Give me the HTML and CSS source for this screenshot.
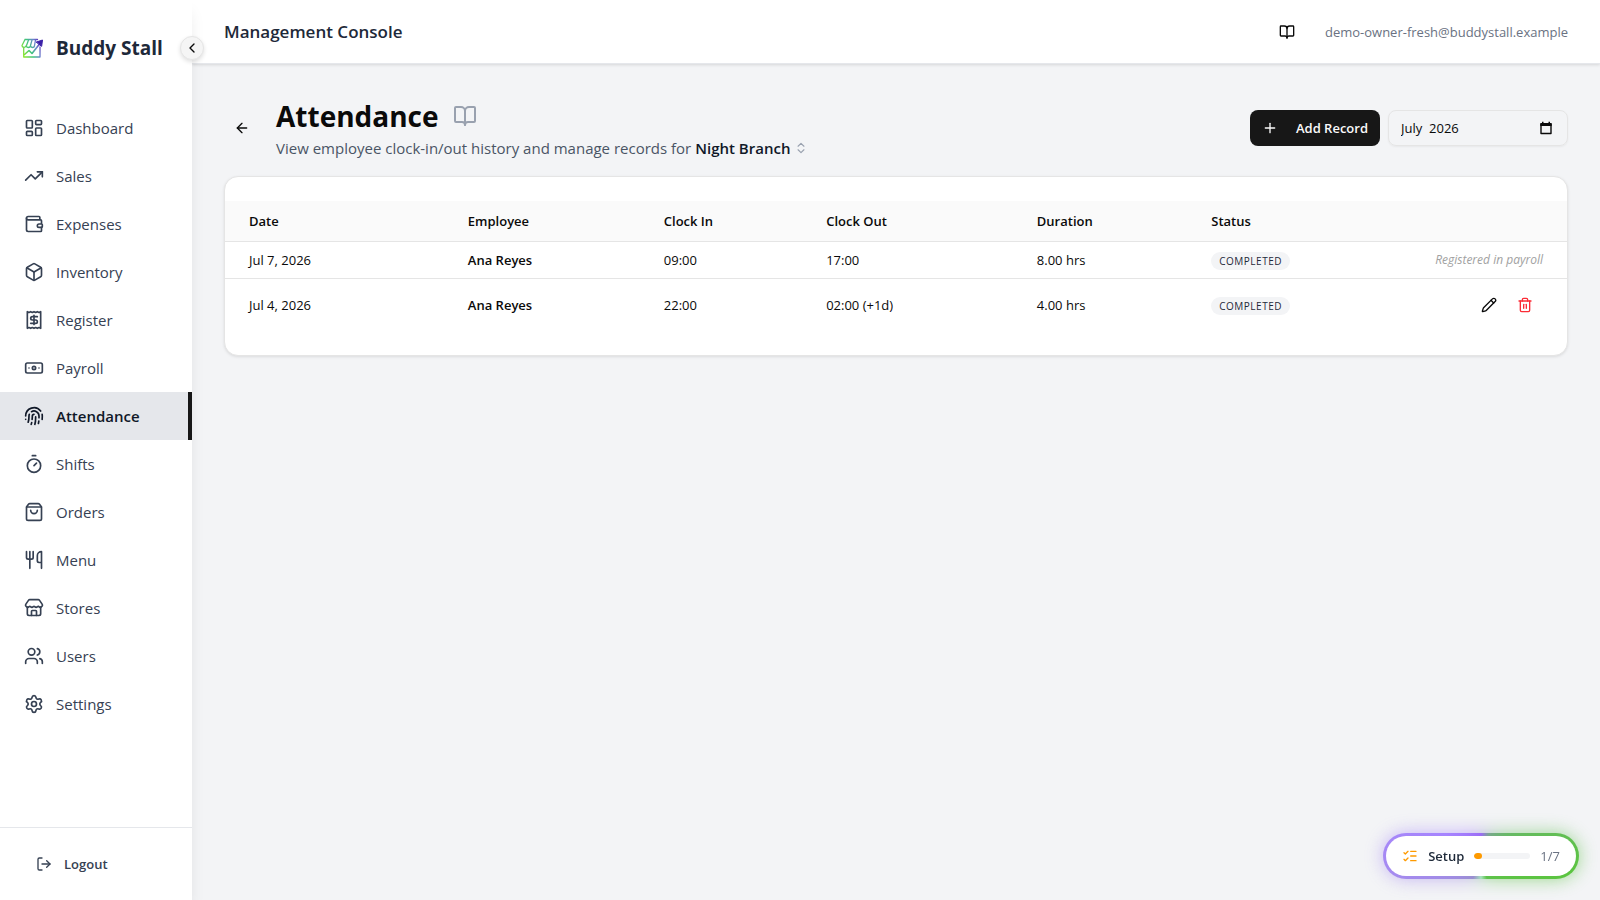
FILE: index.html
```html
<!DOCTYPE html>
<html lang="en">
<head>
    <meta charset="UTF-8">
    <meta name="viewport" content="width=device-width, initial-scale=1.0">
    <title>Attendance - Buddy Stall</title>
    <link rel="stylesheet" href="styles.css">
</head>
<body>
    <div class="app">
        <aside class="sidebar">
            <div class="brand">
                <svg class="brand-logo" viewBox="0 0 24 24" fill="none" stroke="url(#brandGradient)" stroke-width="1.3" stroke-linejoin="round" stroke-linecap="round">
                    <defs>
                        <linearGradient id="brandGradient" gradientUnits="userSpaceOnUse" x1="2" y1="16" x2="22" y2="8">
                            <stop offset="0" stop-color="#8be62c"/>
                            <stop offset="0.4" stop-color="#3fc47e"/>
                            <stop offset="0.7" stop-color="#6b84cc"/>
                            <stop offset="1" stop-color="#5b21b6"/>
                        </linearGradient>
                    </defs>
                    <path d="M5 3.500h12.500M5 3.500L2 9.500c0 2 3 2.500 4 .5 1 2 4 2 4.500 0 1 2 3.500 2 4 0"/>
                    <path d="M8.500 4L6.500 9.500M12 4L10.500 9.500M15.500 4L14.500 9.500"/>
                    <path d="M3.700 12v9h16.300V11"/>
                    <path d="M4.500 18.500l4.500-4 3 3L19.500 8" stroke-width="1.600"/>
                    <path d="M16.500 6L22.500 4l-.8 6z" fill="#3b1fa8" stroke="#3b1fa8" stroke-width="1"/>
                </svg>
                <span class="brand-name">Buddy Stall</span>
            </div>
            <button class="collapse-btn" type="button" aria-label="Collapse sidebar">
                <svg class="icon icon-sm" viewBox="0 0 24 24"><path d="m15 18-6-6 6-6"/></svg>
            </button>

            <nav class="nav">
                <a href="#" class="nav-link">
                    <svg class="icon" viewBox="0 0 24 24"><rect width="7" height="9" x="3" y="3" rx="1"/><rect width="7" height="5" x="14" y="3" rx="1"/><rect width="7" height="9" x="14" y="12" rx="1"/><rect width="7" height="5" x="3" y="16" rx="1"/></svg>
                    <span>Dashboard</span>
                </a>
                <a href="#" class="nav-link">
                    <svg class="icon" viewBox="0 0 24 24"><path d="M16 7h6v6"/><path d="m22 7-8.5 8.5-5-5L2 17"/></svg>
                    <span>Sales</span>
                </a>
                <a href="#" class="nav-link">
                    <svg class="icon" viewBox="0 0 24 24"><path d="M19 7V4a1 1 0 0 0-1-1H5a2 2 0 0 0 0 4h15a1 1 0 0 1 1 1v4h-3a2 2 0 0 0 0 4h3a1 1 0 0 0 1-1v-2a1 1 0 0 0-1-1"/><path d="M3 5v14a2 2 0 0 0 2 2h15a1 1 0 0 0 1-1v-4"/></svg>
                    <span>Expenses</span>
                </a>
                <a href="#" class="nav-link">
                    <svg class="icon" viewBox="0 0 24 24"><path d="M21 8a2 2 0 0 0-1-1.730l-7-4a2 2 0 0 0-2 0l-7 4A2 2 0 0 0 3 8v8a2 2 0 0 0 1 1.730l7 4a2 2 0 0 0 2 0l7-4A2 2 0 0 0 21 16Z"/><path d="m3.300 7 8.700 5 8.700-5"/><path d="M12 22V12"/></svg>
                    <span>Inventory</span>
                </a>
                <a href="#" class="nav-link">
                    <svg class="icon" viewBox="0 0 24 24"><path d="M4 2v20l2-1 2 1 2-1 2 1 2-1 2 1 2-1 2 1V2l-2 1-2-1-2 1-2-1-2 1-2-1-2 1Z"/><path d="M16 8h-6a2 2 0 1 0 0 4h4a2 2 0 1 1 0 4H8"/><path d="M12 17.500v-11"/></svg>
                    <span>Register</span>
                </a>
                <a href="#" class="nav-link">
                    <svg class="icon" viewBox="0 0 24 24"><rect width="20" height="12" x="2" y="6" rx="2"/><circle cx="12" cy="12" r="2"/><path d="M6 12h.01M18 12h.01"/></svg>
                    <span>Payroll</span>
                </a>
                <a href="#" class="nav-link active">
                    <svg class="icon" viewBox="0 0 24 24"><path d="M12 10a2 2 0 0 0-2 2c0 1.020-.1 2.510-.26 4"/><path d="M14 13.120c0 2.380 0 6.380-1 8.880"/><path d="M17.290 21.020c.12-.6.430-2.300.5-3.020"/><path d="M2 12a10 10 0 0 1 18-6"/><path d="M2 16h.01"/><path d="M21.800 16c.2-2 .131-5.354 0-6"/><path d="M5 19.500C5.500 18 6 15 6 12a6 6 0 0 1 .34-2"/><path d="M8.650 22c.21-.66.450-1.320.570-2"/><path d="M9 6.800a6 6 0 0 1 9 5.200v2"/></svg>
                    <span>Attendance</span>
                </a>
                <a href="#" class="nav-link">
                    <svg class="icon" viewBox="0 0 24 24"><path d="M10 2h4"/><path d="m12 14 3-3"/><circle cx="12" cy="14" r="8"/></svg>
                    <span>Shifts</span>
                </a>
                <a href="#" class="nav-link">
                    <svg class="icon" viewBox="0 0 24 24"><path d="M16 10a4 4 0 0 1-8 0"/><path d="M3.103 6.034h17.794"/><path d="M3.400 5.467a2 2 0 0 0-.4 1.200V20a2 2 0 0 0 2 2h14a2 2 0 0 0 2-2V6.667a2 2 0 0 0-.4-1.200l-2-2.667A2 2 0 0 0 17 2H7a2 2 0 0 0-1.600.8z"/></svg>
                    <span>Orders</span>
                </a>
                <a href="#" class="nav-link">
                    <svg class="icon" viewBox="0 0 24 24"><path d="M3 2v7c0 1.100.9 2 2 2h4a2 2 0 0 0 2-2V2"/><path d="M7 2v20"/><path d="M21 15V2a5 5 0 0 0-5 5v6c0 1.100.9 2 2 2h3Zm0 0v7"/></svg>
                    <span>Menu</span>
                </a>
                <a href="#" class="nav-link">
                    <svg class="icon" viewBox="0 0 24 24"><path d="M15 21v-5a1 1 0 0 0-1-1h-4a1 1 0 0 0-1 1v5"/><path d="M17.774 10.310a1.120 1.120 0 0 0-1.549 0 2.500 2.500 0 0 1-3.451 0 1.120 1.120 0 0 0-1.548 0 2.500 2.500 0 0 1-3.452 0 1.120 1.120 0 0 0-1.549 0 2.500 2.500 0 0 1-3.770-3.248l2.889-4.184A2 2 0 0 1 7 2h10a2 2 0 0 1 1.653.873l2.895 4.192a2.500 2.500 0 0 1-3.774 3.244"/><path d="M4 10.950V19a2 2 0 0 0 2 2h12a2 2 0 0 0 2-2v-8.050"/></svg>
                    <span>Stores</span>
                </a>
                <a href="#" class="nav-link">
                    <svg class="icon" viewBox="0 0 24 24"><path d="M16 21v-2a4 4 0 0 0-4-4H6a4 4 0 0 0-4 4v2"/><path d="M16 3.128a4 4 0 0 1 0 7.744"/><path d="M22 21v-2a4 4 0 0 0-3-3.870"/><circle cx="9" cy="7" r="4"/></svg>
                    <span>Users</span>
                </a>
                <a href="#" class="nav-link">
                    <svg class="icon" viewBox="0 0 24 24"><path d="M9.671 4.136a2.340 2.340 0 0 1 4.659 0 2.340 2.340 0 0 0 3.319 1.915 2.340 2.340 0 0 1 2.330 4.033 2.340 2.340 0 0 0 0 3.831 2.340 2.340 0 0 1-2.330 4.033 2.340 2.340 0 0 0-3.319 1.915 2.340 2.340 0 0 1-4.659 0 2.340 2.340 0 0 0-3.320-1.915 2.340 2.340 0 0 1-2.330-4.033 2.340 2.340 0 0 0 0-3.831A2.340 2.340 0 0 1 6.350 6.051a2.340 2.340 0 0 0 3.319-1.915"/><circle cx="12" cy="12" r="3"/></svg>
                    <span>Settings</span>
                </a>
            </nav>

            <div class="sidebar-footer">
                <button class="logout-btn" type="button">
                    <svg class="icon icon-sm" viewBox="0 0 24 24"><path d="m16 17 5-5-5-5"/><path d="M21 12H9"/><path d="M9 21H5a2 2 0 0 1-2-2V5a2 2 0 0 1 2-2h4"/></svg>
                    <span>Logout</span>
                </button>
            </div>
        </aside>

        <div class="content">
            <header class="topbar">
                <div class="topbar-title">Management Console</div>
                <div class="topbar-user">
                    <a href="#" class="guide-link" aria-label="User guide">
                        <svg class="icon icon-sm" viewBox="0 0 24 24"><path d="M12 7v14"/><path d="M3 18a1 1 0 0 1-1-1V4a1 1 0 0 1 1-1h5a4 4 0 0 1 4 4 4 4 0 0 1 4-4h5a1 1 0 0 1 1 1v13a1 1 0 0 1-1 1h-6a3 3 0 0 0-3 3 3 3 0 0 0-3-3z"/></svg>
                    </a>
                    <span class="user-email">demo-owner-fresh@buddystall.example</span>
                </div>
            </header>

            <main class="main">
                <div class="page-header">
                    <button class="icon-btn" type="button" aria-label="Back">
                        <svg class="icon icon-sm" viewBox="0 0 24 24"><path d="m12 19-7-7 7-7"/><path d="M19 12H5"/></svg>
                    </button>
                    <div class="page-heading">
                        <div class="title-row">
                            <h1>Attendance</h1>
                            <a href="#" class="title-guide" aria-label="Attendance guide">
                                <svg class="icon icon-lg" viewBox="0 0 24 24"><path d="M12 7v14"/><path d="M3 18a1 1 0 0 1-1-1V4a1 1 0 0 1 1-1h5a4 4 0 0 1 4 4 4 4 0 0 1 4-4h5a1 1 0 0 1 1 1v13a1 1 0 0 1-1 1h-6a3 3 0 0 0-3 3 3 3 0 0 0-3-3z"/></svg>
                            </a>
                        </div>
                        <div class="subtitle">
                            <span>View employee clock-in/out history and manage records for</span>
                            <button class="branch-btn" type="button">
                                <span>Night Branch</span>
                                <svg class="icon icon-xs" viewBox="0 0 24 24"><path d="m7 15 5 5 5-5"/><path d="m7 9 5-5 5 5"/></svg>
                            </button>
                        </div>
                    </div>
                    <div class="page-actions">
                        <button class="add-btn" type="button">
                            <svg class="icon icon-sm" viewBox="0 0 24 24"><path d="M5 12h14"/><path d="M12 5v14"/></svg>
                            <span>Add Record</span>
                        </button>
                        <div class="month-field">
                            <input class="month-input" type="text" value="July  2026" aria-label="Month">
                            <button class="month-picker" type="button" aria-label="Show month picker">
                                <svg class="month-icon" viewBox="0 0 14 14"><path d="M2 3v9.500h10V3" fill="none" stroke="currentColor" stroke-width="1.400" stroke-linejoin="round"/><path d="M1.300 2h11.400v3H1.300zM3 .8h1.500V3H3zM9.500.8H11V3H9.500z" fill="currentColor"/></svg>
                            </button>
                        </div>
                    </div>
                </div>

                <section class="card">
                    <table class="records">
                        <colgroup>
                            <col class="col-date">
                            <col class="col-employee">
                            <col class="col-in">
                            <col class="col-out">
                            <col class="col-duration">
                            <col>
                            <col>
                        </colgroup>
                        <thead>
                            <tr>
                                <th>Date</th>
                                <th>Employee</th>
                                <th>Clock In</th>
                                <th>Clock Out</th>
                                <th>Duration</th>
                                <th>Status</th>
                                <th></th>
                            </tr>
                        </thead>
                        <tbody>
                            <tr>
                                <td>Jul 7, 2026</td>
                                <td class="employee">Ana Reyes</td>
                                <td>09:00</td>
                                <td>17:00</td>
                                <td>8.00 hrs</td>
                                <td><span class="badge">COMPLETED</span></td>
                                <td><div class="row-note">Registered in payroll</div></td>
                            </tr>
                            <tr>
                                <td>Jul 4, 2026</td>
                                <td class="employee">Ana Reyes</td>
                                <td>22:00</td>
                                <td>02:00 (+1d)</td>
                                <td>4.00 hrs</td>
                                <td><span class="badge">COMPLETED</span></td>
                                <td>
                                    <div class="row-actions">
                                        <button class="icon-btn" type="button" aria-label="Edit record">
                                            <svg class="icon icon-sm" viewBox="0 0 24 24"><path d="M21.174 6.812a1 1 0 0 0-3.986-3.987L3.842 16.174a2 2 0 0 0-.5.830l-1.321 4.352a.5.5 0 0 0 .623.622l4.353-1.320a2 2 0 0 0 .830-.497z"/><path d="m15 5 4 4"/></svg>
                                        </button>
                                        <button class="icon-btn danger" type="button" aria-label="Delete record">
                                            <svg class="icon icon-sm" viewBox="0 0 24 24"><path d="M10 11v6"/><path d="M14 11v6"/><path d="M19 6v14a2 2 0 0 1-2 2H7a2 2 0 0 1-2-2V6"/><path d="M3 6h18"/><path d="M8 6V4a2 2 0 0 1 2-2h4a2 2 0 0 1 2 2v2"/></svg>
                                        </button>
                                    </div>
                                </td>
                            </tr>
                        </tbody>
                    </table>
                </section>
            </main>
        </div>
    </div>

    <div class="setup">
        <button class="setup-pill" type="button">
            <svg class="icon icon-sm setup-icon" viewBox="0 0 24 24"><path d="M13 5h8"/><path d="M13 12h8"/><path d="M13 19h8"/><path d="m3 17 2 2 4-4"/><path d="m3 7 2 2 4-4"/></svg>
            <span class="setup-label">Setup</span>
            <span class="setup-track"><span class="setup-bar" style="width: 14.28%"></span></span>
            <span class="setup-count">1/7</span>
        </button>
    </div>
</body>
</html>
```
FILE: styles.css
```css
* {
    box-sizing: border-box;
}
body {
    margin: 0;
    font-family: "Segoe UI", "Open Sans", "Noto Sans", sans-serif;
    font-size: 13px;
    line-height: 20px;
    color: #0a0a0a;
    background-color: #f3f4f6;
}
button {
    font-family: inherit;
    font-size: inherit;
    line-height: inherit;
    color: inherit;
    background: none;
    border: none;
    padding: 0;
    cursor: pointer;
}
a {
    color: inherit;
    text-decoration: none;
}
.icon {
    width: 20px;
    height: 20px;
    flex-shrink: 0;
    fill: none;
    stroke: currentColor;
    stroke-width: 2;
    stroke-linecap: round;
    stroke-linejoin: round;
}
.icon-xs {
    width: 14px;
    height: 14px;
}
.icon-sm {
    width: 16px;
    height: 16px;
}
.icon-lg {
    width: 24px;
    height: 24px;
}
.app {
    display: flex;
    min-height: 100vh;
}

/* Sidebar */
.sidebar {
    position: relative;
    z-index: 2;
    display: flex;
    flex-direction: column;
    flex-shrink: 0;
    width: 192px;
    background-color: white;
    box-shadow: 0 10px 15px -3px rgba(0, 0, 0, 0.1);
}
.brand {
    display: flex;
    align-items: center;
    gap: 12px;
    height: 96px;
    padding: 0 20px;
}
.brand-logo {
    width: 24px;
    height: 24px;
}
.brand-name {
    font-size: 19px;
    font-weight: 700;
    line-height: 28px;
    color: #1e2939;
    white-space: nowrap;
}
.collapse-btn {
    position: absolute;
    top: 36px;
    right: -12px;
    display: flex;
    align-items: center;
    justify-content: center;
    width: 24px;
    height: 24px;
    background-color: #f5f5f5;
    border: 1px solid #e5e5e5;
    border-radius: 50%;
    box-shadow: 0 2px 4px rgba(0, 0, 0, 0.12);
}
.nav {
    flex: 1;
    padding-top: 8px;
}
.nav-link {
    display: flex;
    align-items: center;
    gap: 12px;
    height: 48px;
    padding: 0 20px 0 24px;
    border-right: 4px solid transparent;
    font-size: 15px;
    line-height: 24px;
    color: #364153;
}
.nav-link.active {
    background-color: #e5e7eb;
    border-right-color: #171717;
    color: #101828;
    font-weight: 600;
}
.sidebar-footer {
    padding: 16px 24px;
    border-top: 1px solid #e5e7eb;
}
.logout-btn {
    display: flex;
    align-items: center;
    gap: 12px;
    width: 100%;
    height: 40px;
    padding: 0 12px;
    color: #364153;
    font-weight: 600;
}

/* Header bar */
.content {
    flex: 1;
    min-width: 0;
}
.topbar {
    display: flex;
    align-items: center;
    justify-content: space-between;
    height: 64px;
    padding: 0 32px;
    background-color: white;
    border-bottom: 1px solid #e5e7eb;
    box-shadow: 0 1px 3px rgba(0, 0, 0, 0.12);
}
.topbar-title {
    font-size: 17px;
    font-weight: 600;
    line-height: 28px;
    color: #1e2939;
}
.topbar-user {
    display: flex;
    align-items: center;
    gap: 20px;
}
.guide-link {
    display: flex;
    padding: 10px;
    color: #0a0a0a;
}
.user-email {
    color: #6a7282;
}

/* Page */
.main {
    padding: 32px;
}
.page-header {
    display: flex;
    align-items: center;
    gap: 16px;
    margin-bottom: 16px;
}
.icon-btn {
    display: flex;
    align-items: center;
    justify-content: center;
    width: 36px;
    height: 36px;
    border-radius: 8px;
}
.icon-btn.danger {
    color: #fb2c36;
}
.page-heading {
    flex: 1;
}
.title-row {
    display: flex;
    align-items: center;
    gap: 14px;
}
h1 {
    margin: 0;
    font-size: 28px;
    font-weight: 700;
    line-height: 40px;
}
.title-guide {
    display: flex;
    color: #99a1af;
}
.subtitle {
    display: flex;
    align-items: center;
    gap: 4px;
    font-size: 15px;
    line-height: 24px;
    color: #4a5565;
}
.branch-btn {
    display: flex;
    align-items: center;
    gap: 4px;
    color: #101828;
    font-weight: 600;
}
.branch-btn .icon {
    color: #99a1af;
}
.page-actions {
    display: flex;
    gap: 8px;
}
.add-btn {
    display: flex;
    align-items: center;
    gap: 18px;
    height: 36px;
    padding: 0 12px;
    background-color: #171717;
    border-radius: 8px;
    color: #fafafa;
    font-weight: 600;
}
.month-field {
    display: flex;
    align-items: center;
    width: 180px;
    height: 36px;
    padding: 0 14px 0 12px;
    border: 1px solid #e5e5e5;
    border-radius: 8px;
    box-shadow: 0 1px 2px rgba(0, 0, 0, 0.05);
}
.month-input {
    flex: 1;
    min-width: 0;
    padding: 0;
    border: none;
    outline: none;
    background: none;
    font-family: inherit;
    font-size: 13px;
    line-height: 20px;
    color: inherit;
    white-space: pre;
}
.month-picker,
.month-icon {
    display: block;
    width: 14px;
    height: 14px;
}

/* Records table */
.card {
    padding: 24px 0;
    background-color: white;
    border: 1px solid #e5e5e5;
    border-radius: 14px;
    box-shadow: 0 1px 3px rgba(0, 0, 0, 0.1);
}
.records {
    width: 100%;
    table-layout: fixed;
    border-collapse: separate;
    border-spacing: 0;
}
.col-date {
    width: 17.5%;
}
.col-employee {
    width: 14.6%;
}
.col-in {
    width: 12.1%;
}
.col-out {
    width: 15.7%;
}
.col-duration {
    width: 13%;
}
.records th {
    height: 41px;
    padding: 0 8px;
    background-color: #fafafa;
    border-bottom: 1px solid #e5e5e5;
    text-align: left;
    font-weight: 600;
}
.records td {
    padding: 8px;
    vertical-align: middle;
}
.records tbody tr:not(:last-child) td {
    border-bottom: 1px solid #e5e5e5;
}
.records th:first-child,
.records td:first-child {
    padding-left: 24px;
}
.records th:last-child,
.records td:last-child {
    padding-right: 24px;
}
.employee {
    font-weight: 600;
}
.badge {
    display: inline-block;
    padding: 0 8px;
    background-color: #f3f4f6;
    border-radius: 9px;
    color: #1e2939;
    font-size: 10px;
    font-weight: 500;
    line-height: 18px;
    letter-spacing: 0.05em;
    vertical-align: bottom;
}
.row-note {
    color: #a1a1a1;
    font-size: 12px;
    font-style: italic;
    text-align: right;
}
.row-actions {
    display: flex;
    justify-content: flex-end;
}

/* Floating setup progress */
.setup {
    --ring: conic-gradient(#9b6cf5 0deg, #7aa88f 20deg, #68b868 50deg, #5bc440 100deg, #5fc24c 165deg, #a6e3bb 180deg, #9a8fd0 200deg, #a58af0 260deg, #a684ff 300deg, #9b6cf5 360deg);
    position: fixed;
    right: 21px;
    bottom: 21px;
    z-index: 3;
}
.setup::before {
    content: "";
    position: absolute;
    inset: 0;
    border-radius: 23px;
    background: var(--ring);
    filter: blur(9px);
    opacity: 0.6;
}
.setup-pill {
    position: relative;
    display: flex;
    align-items: center;
    gap: 10px;
    height: 46px;
    padding: 0 16px;
    border: 3px solid transparent;
    border-radius: 23px;
    background: linear-gradient(white, white) padding-box, var(--ring) border-box;
}
.setup-icon {
    color: #fe9a00;
}
.setup-label {
    color: #1e2939;
    font-weight: 600;
}
.setup-track {
    width: 56px;
    height: 6px;
    background-color: #f3f4f6;
    border-radius: 3px;
    overflow: hidden;
}
.setup-bar {
    display: block;
    height: 100%;
    background-color: #fe9a00;
    border-radius: 3px;
}
.setup-count {
    color: #6a7282;
}
```
